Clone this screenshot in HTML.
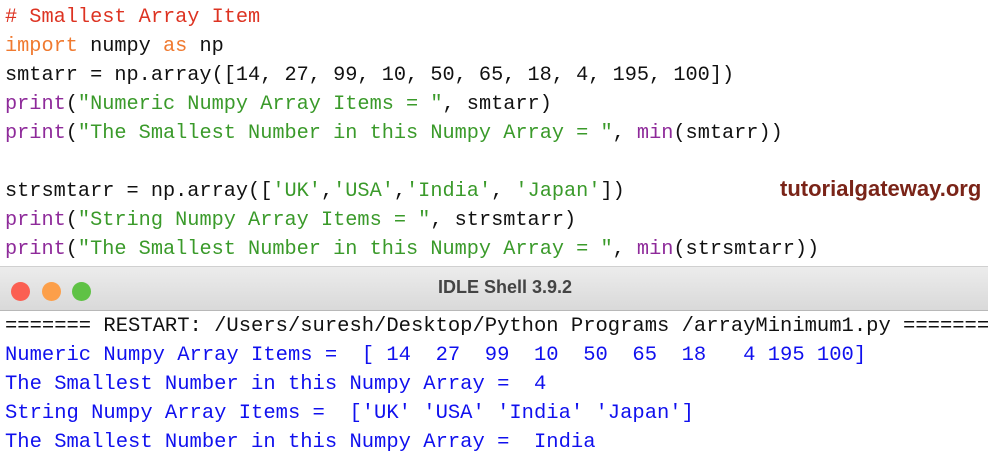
<!DOCTYPE html>
<html><head><meta charset="utf-8"><style>
html,body{margin:0;padding:0;background:#fff;width:988px;height:454px;overflow:hidden;position:relative}
.ed{position:absolute;left:5px;top:3px;font-family:"Liberation Mono",monospace;font-size:20.25px;line-height:29px;white-space:pre;color:#111}
.c{color:#dd3322}.k{color:#f07a30}.b{color:#8e2a9a}.s{color:#3a9a2a}
.logo{position:absolute;left:780px;top:176px;font-family:"Liberation Sans",sans-serif;font-weight:bold;font-size:22px;color:#7a2418}
.tb{position:absolute;left:0;top:266px;width:988px;height:43px;background:linear-gradient(#ececec,#d9d9d9);border-top:1px solid #d0d0d0;border-bottom:1px solid #b8b8b8}
.dot{position:absolute;top:15px;width:19px;height:19px;border-radius:50%}
.title{position:absolute;left:0;width:1010px;top:10px;text-align:center;font-family:"Liberation Sans",sans-serif;font-weight:bold;font-size:18px;color:#444}
.sh{position:absolute;left:5px;top:312px;font-family:"Liberation Mono",monospace;font-size:20.5px;line-height:29px;white-space:pre;color:#111}
.o{color:#1010ee}
</style></head><body>
<div class="ed"><span class="c"># Smallest Array Item</span>
<span class="k">import</span> numpy <span class="k">as</span> np
smtarr = np.array([14, 27, 99, 10, 50, 65, 18, 4, 195, 100])
<span class="b">print</span>(<span class="s">"Numeric Numpy Array Items = "</span>, smtarr)
<span class="b">print</span>(<span class="s">"The Smallest Number in this Numpy Array = "</span>, <span class="b">min</span>(smtarr))

strsmtarr = np.array([<span class="s">'UK'</span>,<span class="s">'USA'</span>,<span class="s">'India'</span>, <span class="s">'Japan'</span>])
<span class="b">print</span>(<span class="s">"String Numpy Array Items = "</span>, strsmtarr)
<span class="b">print</span>(<span class="s">"The Smallest Number in this Numpy Array = "</span>, <span class="b">min</span>(strsmtarr))</div>
<div class="logo">tutorialgateway.org</div>
<div class="tb">
<div class="dot" style="left:11px;background:#fb5f52"></div>
<div class="dot" style="left:42px;background:#fc9f4a"></div>
<div class="dot" style="left:72px;background:#5fc245"></div>
<div class="title">IDLE Shell 3.9.2</div>
</div>
<div class="sh">======= RESTART: /Users/suresh/Desktop/Python Programs /arrayMinimum1.py =======
<span class="o">Numeric Numpy Array Items =  [ 14  27  99  10  50  65  18   4 195 100]
The Smallest Number in this Numpy Array =  4
String Numpy Array Items =  ['UK' 'USA' 'India' 'Japan']
The Smallest Number in this Numpy Array =  India</span></div>
</body></html>
